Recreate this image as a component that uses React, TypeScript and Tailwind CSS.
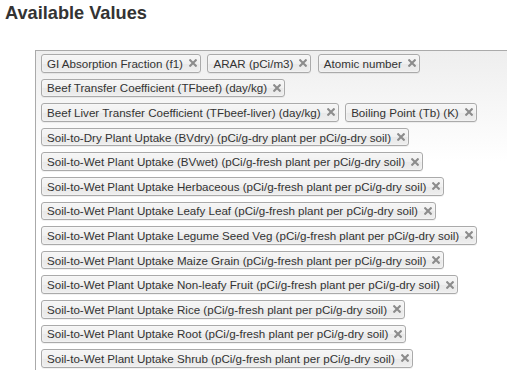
const VALUES = [
  'GI Absorption Fraction (f1)',
  'ARAR (pCi/m3)',
  'Atomic number',
  'Beef Transfer Coefficient (TFbeef) (day/kg)',
  'Beef Liver Transfer Coefficient (TFbeef-liver) (day/kg)',
  'Boiling Point (Tb) (K)',
  'Soil-to-Dry Plant Uptake (BVdry) (pCi/g-dry plant per pCi/g-dry soil)',
  'Soil-to-Wet Plant Uptake (BVwet) (pCi/g-fresh plant per pCi/g-dry soil)',
  'Soil-to-Wet Plant Uptake Herbaceous (pCi/g-fresh plant per pCi/g-dry soil)',
  'Soil-to-Wet Plant Uptake Leafy Leaf (pCi/g-fresh plant per pCi/g-dry soil)',
  'Soil-to-Wet Plant Uptake Legume Seed Veg (pCi/g-fresh plant per pCi/g-dry soil)',
  'Soil-to-Wet Plant Uptake Maize Grain (pCi/g-fresh plant per pCi/g-dry soil)',
  'Soil-to-Wet Plant Uptake Non-leafy Fruit (pCi/g-fresh plant per pCi/g-dry soil)',
  'Soil-to-Wet Plant Uptake Rice (pCi/g-fresh plant per pCi/g-dry soil)',
  'Soil-to-Wet Plant Uptake Root (pCi/g-fresh plant per pCi/g-dry soil)',
  'Soil-to-Wet Plant Uptake Shrub (pCi/g-fresh plant per pCi/g-dry soil)',
];

function CloseIcon() {
  return (
    <svg width="8" height="8" viewBox="0 0 8 8" className="shrink-0">
      <path d="M1.2 1.2 L6.8 6.8 M6.8 1.2 L1.2 6.8" stroke="#8c8c8c" strokeWidth="2.1" strokeLinecap="square" />
    </svg>
  );
}

function Chip({ label }: { label: string }) {
  return (
    <li className="box-border flex h-[18.6px] my-[3px] items-center rounded-[3px] border border-[#aaa] bg-[linear-gradient(to_bottom,#f4f4f4_20%,#f0f0f0_50%,#e8e8e8_52%,#eee_100%)] pl-[5px] pr-[3px] shadow-[inset_0_0_2px_#fff,0_1px_0_rgba(0,0,0,0.05)]">
      <span className="whitespace-nowrap text-[11.6px] leading-[13px] text-[#333]">{label}</span>
      <span className="ml-[6px] flex items-center">
        <CloseIcon />
      </span>
    </li>
  );
}

export default function App() {
  return (
    <div
      className="h-[370px] w-[507px] overflow-hidden bg-white"
      style={{ fontFamily: '"Liberation Sans", Arial, sans-serif' }}
    >
      <h2 className="pl-[5px] pt-[3px] text-[18.2px] font-bold leading-[20px] text-[#333]">Available Values</h2>

      <ul className="ml-[35px] mt-[27px] box-border flex w-[500px] flex-wrap gap-x-[6.5px] border border-[#aaa] bg-[linear-gradient(to_bottom,#eee_0px,#fff_110px)] pl-[5px] pb-[10px]">
        {VALUES.map(v => (
          <Chip key={v} label={v} />
        ))}
      </ul>
    </div>
  );
}
